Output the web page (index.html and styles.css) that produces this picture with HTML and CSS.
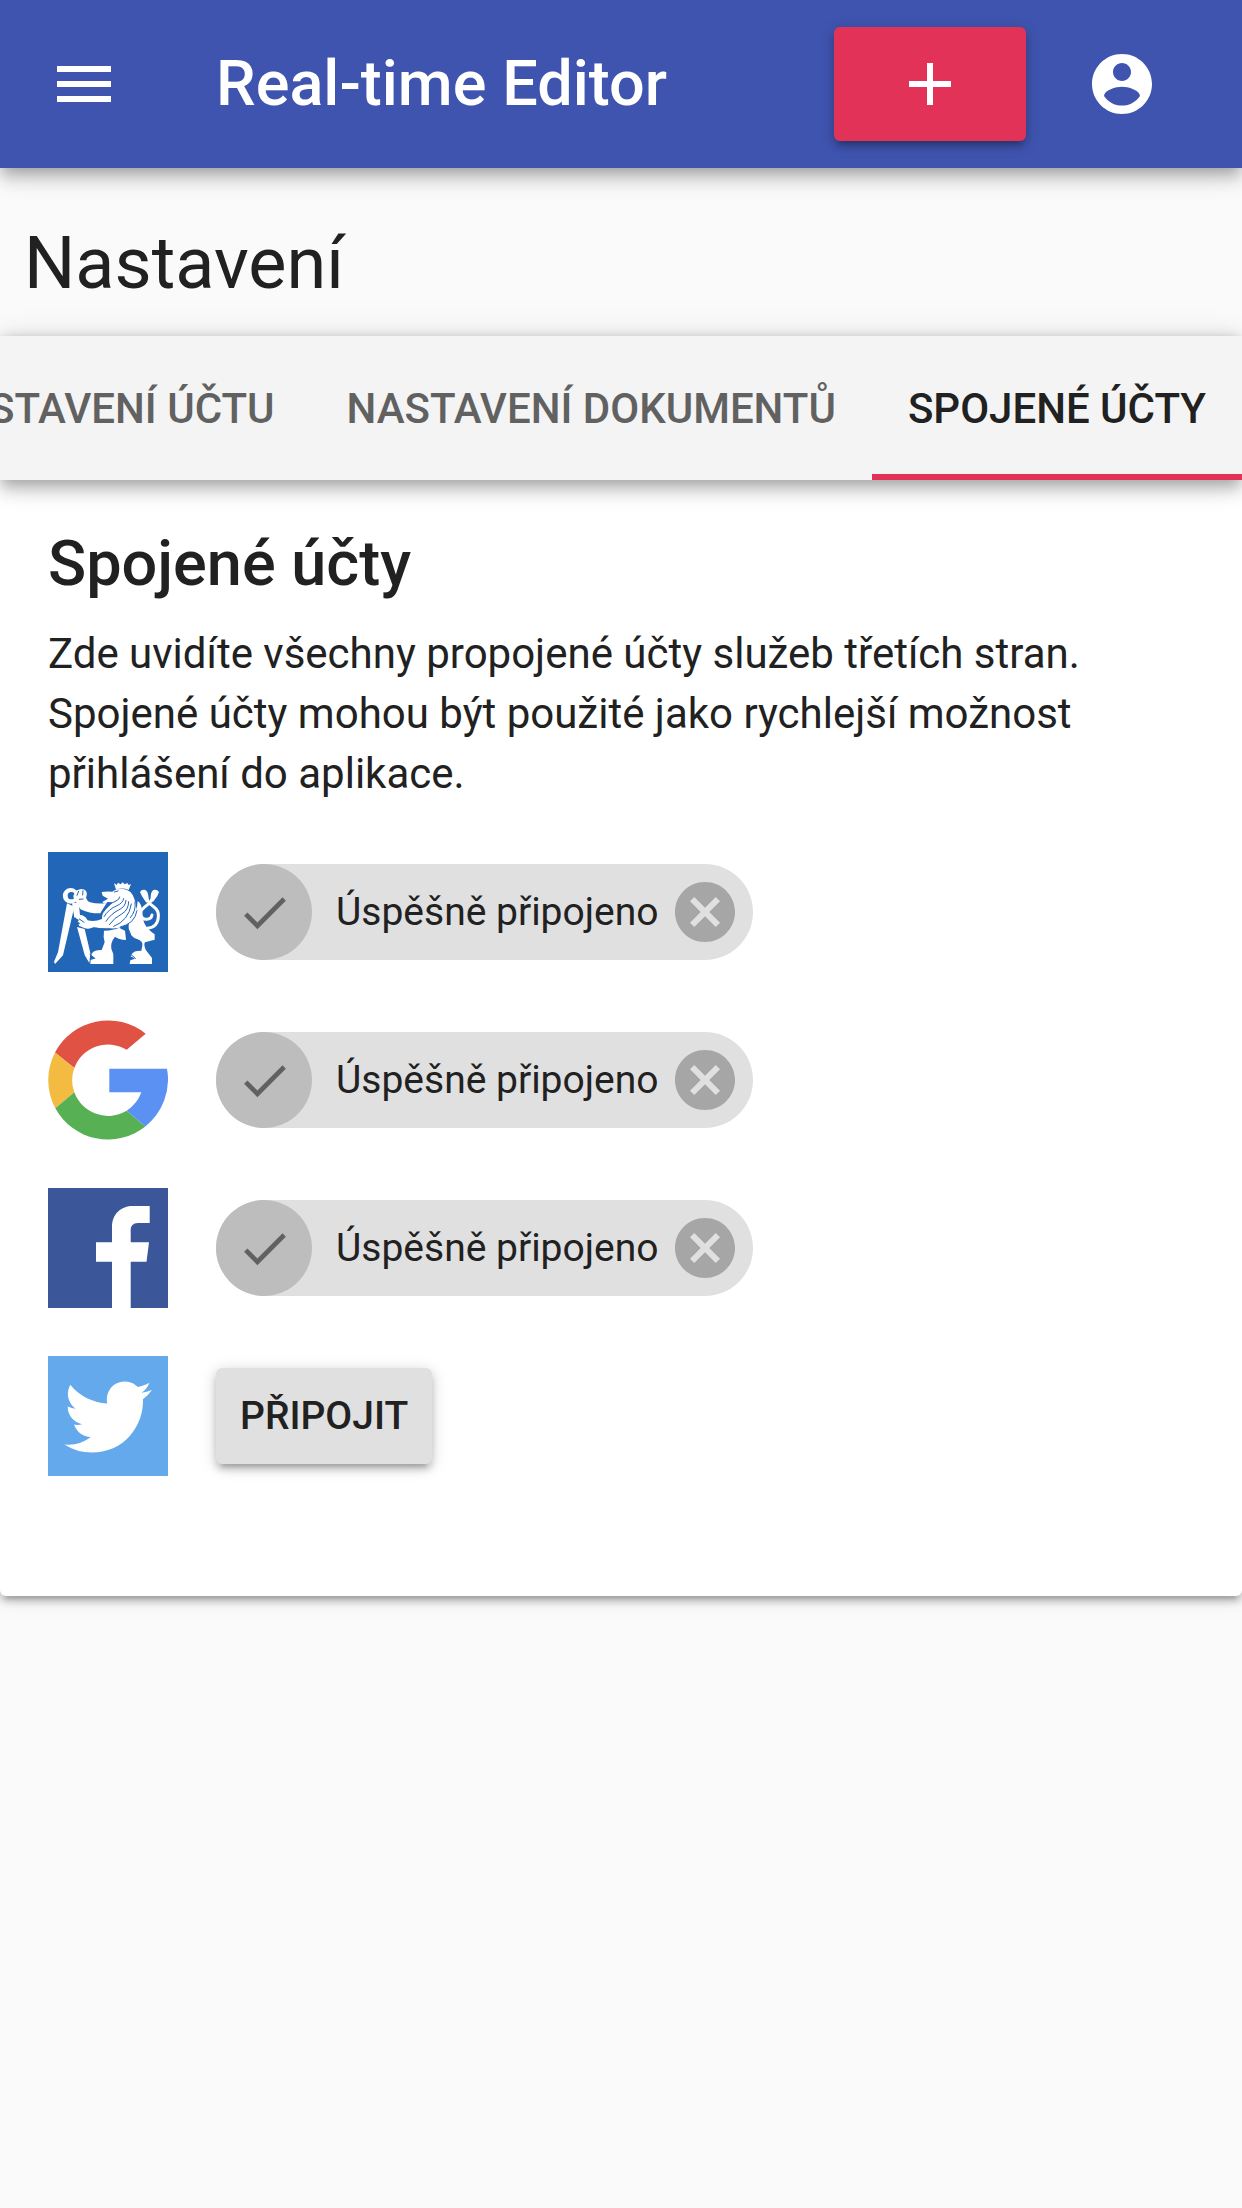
FILE: index.html
```html
<!DOCTYPE html>
<html lang="cs">
<head>
<meta charset="utf-8">
<meta name="viewport" content="width=device-width, initial-scale=1">
<title>Real-time Editor</title>
<link rel="stylesheet" href="styles.css">
</head>
<body>
<svg class="sprite" aria-hidden="true">
  <symbol id="check" viewBox="0 0 24 24"><path d="M9 16.17L4.83 12l-1.42 1.41L9 19 21 7l-1.41-1.41z"/></symbol>
  <symbol id="cancel" viewBox="0 0 24 24"><path d="M12 2C6.47 2 2 6.47 2 12s4.47 10 10 10 10-4.47 10-10S17.53 2 12 2zm5 13.59L15.59 17 12 13.41 8.41 17 7 15.59 10.59 12 7 8.41 8.41 7 12 10.59 15.59 7 17 8.41 13.41 12 17 15.59z"/></symbol>
</svg>

<header class="app-bar">
  <button class="icon-button" type="button" aria-label="Menu">
    <svg class="icon" viewBox="0 0 24 24"><path d="M3 18h18v-2H3v2zm0-5h18v-2H3v2zm0-7v2h18V6H3z"/></svg>
  </button>
  <div class="app-title">Real-time Editor</div>
  <button class="create-button" type="button" aria-label="Nový dokument">
    <svg class="icon" viewBox="0 0 24 24"><path d="M19 13h-6v6h-2v-6H5v-2h6V5h2v6h6v2z"/></svg>
  </button>
  <button class="icon-button icon-button-wide" type="button" aria-label="Účet">
    <svg class="icon" viewBox="0 0 24 24"><path d="M12 2C6.48 2 2 6.48 2 12s4.48 10 10 10 10-4.48 10-10S17.52 2 12 2zm0 3c1.66 0 3 1.34 3 3s-1.34 3-3 3-3-1.34-3-3 1.34-3 3-3zm0 14.200c-2.500 0-4.710-1.280-6-3.220.030-1.990 4-3.080 6-3.080 1.990 0 5.970 1.090 6 3.080-1.290 1.940-3.500 3.220-6 3.220z"/></svg>
  </button>
</header>

<main>
  <h1 class="page-title">Nastavení</h1>
  <section class="card">
    <nav class="tabs">
      <button class="tab" type="button">Nastavení účtu</button>
      <button class="tab" type="button">Nastavení dokumentů</button>
      <button class="tab tab-active" type="button" aria-current="page">Spojené účty</button>
    </nav>
    <div class="card-body">
      <h2 class="section-title">Spojené účty</h2>
      <p class="intro">Zde uvidíte všechny propojené účty služeb třetích stran. Spojené účty mohou být použité jako rychlejší možnost přihlášení do aplikace.</p>
      <ul class="accounts">
        <li class="account">
          <svg class="logo" viewBox="0 -72 360 360" role="img" aria-label="ČVUT">
            <path fill="#2267b7" d="M0-72h360v360H0z"/>
            <g fill="#fff">
              <path fill-rule="evenodd" d="M68 36a23 23 0 1 0 0 47 23 23 0 0 0 0-47zm2 12a11 11 0 1 1 0 22 11 11 0 0 1 0-22z"/>
              <path d="M57 82l22 10-34 146-24 26-3-7 12-28z"/>
              <path d="M72 82l20-3 4 38-17 8zM87 153l23 6 17 72-3 30-14-24z"/>
              <path d="M79 53q1-10 13-12 14-5 22 4 5 8 0 20 3 10 12 14 25 6 50 2l-11 17-8 14q-31 1-57-11-10-7-7-17l-9-5-7-13q-3-8 2-13z"/>
              <path d="M79 121q10-8 24-3 11 4 16 15 21 5 43-4l6 20q7 5 14 8l-29-1q-10-3-17-2-15 8-29 1l-13-5q-5-6 3-8l-8-5 4-5-9-5z"/>
              <path d="M198 21l8 6 4-7 8 5 6-6 6 6 8-4 4 6 7-3-7 18q-18-8-38-1z"/>
              <path d="M161 48q16-3 32-1 10-9 29-9 30 2 38 33 8 23 2 46-8 26-48 38-22 5-49-1-4-14-3-32 2-15 18-28l14-15-15-1q-9 9-16 0l17-10-16-9z"/>
              <path d="M269 75q13 9 14 34 0 29 14 46 13 13 23 20v16l-29 8q-5 7 3 24l18 23v18h-67l2-11 14-5-13-7q4-14 20-16l12-1 3-15q3-12-14-19-26-8-27-34-1-21 10-32 15-18 17-49z"/>
              <path d="M168 164q30-1 45-9l18 9q2 16 3 28-22-2-33-10-14 17-11 36l6 17v29h-69l1-12 15-5-14-8q5-15 20-16l12-1 9-23q-5-17-2-35z"/>
              <path d="M276 48q4-8 13-7 9 2 11 13l3 18-8 8q-7-10-13-19zM333 48q-5-8-14-7-8 2-10 13l-2 18 8 6q6-9 13-18z"/>
            </g>
            <g fill="none" stroke="#fff" stroke-linecap="round" stroke-width="9">
              <path d="M299 73q5 10 18 19 16 11 14 31-2 31-33 34-20 2-28-16"/>
              <path d="M311 72q-8 13-22 22-13 10-11 22 3 15 18 14 14-1 16-13"/>
            </g>
            <g fill="none" stroke="#2267b7" stroke-width="3" stroke-linecap="round">
              <path d="M199 48l11-3M166 108q12-23 38-33 10-4 11-12M168 122q14-23 39-33 18-8 20-21M174 136q15-23 38-34 21-10 22-29M184 146q15-21 37-32 21-12 21-37M197 151q45-17 53-67M261 78q4 27-14 47M217 153q43-9 50-49M233 151q15 14 16 29"/>
              <path d="M92 46l-5 12M105 44l-1 13M94 70l11-1M94 129l14 10M126 235l13 11M248 235l14 12"/>
            </g>
          </svg>
          <div class="chip">
            <span class="chip-avatar"><svg class="icon" aria-hidden="true"><use href="#check"/></svg></span>
            <span class="chip-label">Úspěšně připojeno</span>
            <button class="chip-delete" type="button" aria-label="Odpojit ČVUT"><svg class="icon"><use href="#cancel"/></svg></button>
          </div>
        </li>
        <li class="account">
          <svg class="logo" viewBox="0 0 120 120" role="img" aria-label="Google">
            <path fill="#e05243" d="M7 32.500A60 60 0 0 1 97.700 13.700L78.700 29.700A36 36 0 0 0 26.300 48z"/>
            <path fill="#f3bb42" d="M7 32.500A60 60 0 0 0 7.300 88.300L26.300 72.300A36 36 0 0 1 26.300 48z"/>
            <path fill="#57b054" d="M7.300 88.300A60 60 0 0 0 97.300 106.500L78.700 90.700A36 36 0 0 1 26.300 72.300z"/>
            <path fill="#5a91f3" d="M61.300 48.700H119A60 60 0 0 1 97.300 106.500L78.700 90.700Q89.500 83.500 93.300 72.300H61.300z"/>
          </svg>
          <div class="chip">
            <span class="chip-avatar"><svg class="icon" aria-hidden="true"><use href="#check"/></svg></span>
            <span class="chip-label">Úspěšně připojeno</span>
            <button class="chip-delete" type="button" aria-label="Odpojit Google"><svg class="icon"><use href="#cancel"/></svg></button>
          </div>
        </li>
        <li class="account">
          <svg class="logo" viewBox="0 0 120 120" role="img" aria-label="Facebook">
            <path fill="#3c5799" d="M0 0h120v120H0z"/>
            <path fill="#fff" d="M64 120V73.700H48V54.300H64V39C64 26 73 18 85 18h16.700v17H90c-5 0-7.300 3-7.300 7v12.300h18.300l-2.500 19.400H82.700V120z"/>
          </svg>
          <div class="chip">
            <span class="chip-avatar"><svg class="icon" aria-hidden="true"><use href="#check"/></svg></span>
            <span class="chip-label">Úspěšně připojeno</span>
            <button class="chip-delete" type="button" aria-label="Odpojit Facebook"><svg class="icon"><use href="#cancel"/></svg></button>
          </div>
        </li>
        <li class="account">
          <svg class="logo" viewBox="0 0 120 120" role="img" aria-label="Twitter">
            <path fill="#64a9eb" d="M0 0h120v120H0z"/>
            <path fill="#fff" transform="translate(16.3 17.2) scale(3.65)" d="M23.953 4.570a10 10 0 0 1-2.825.775 4.958 4.958 0 0 0 2.163-2.723c-.951.555-2.005.959-3.127 1.184a4.920 4.920 0 0 0-8.384 4.482C7.690 8.095 4.067 6.130 1.640 3.162a4.822 4.822 0 0 0-.666 2.475c0 1.710.870 3.213 2.188 4.096a4.904 4.904 0 0 1-2.228-.616v.060a4.923 4.923 0 0 0 3.946 4.827 4.996 4.996 0 0 1-2.212.085 4.936 4.936 0 0 0 4.604 3.417 9.867 9.867 0 0 1-6.102 2.105c-.390 0-.779-.023-1.170-.067a13.995 13.995 0 0 0 7.557 2.209c9.053 0 13.998-7.496 13.998-13.985 0-.210 0-.420-.015-.630A9.935 9.935 0 0 0 24 4.590z"/>
          </svg>
          <button class="connect-button" type="button">Připojit</button>
        </li>
      </ul>
    </div>
  </section>
</main>
</body>
</html>
```

FILE: styles.css
```css
* {
  box-sizing: border-box;
}

body {
  margin: 0;
  min-height: 100vh;
  background: #fafafa;
  color: #212121;
  font-family: Roboto, "Liberation Sans", sans-serif;
  font-size: 42px;
  line-height: 60px;
}

button {
  margin: 0;
  padding: 0;
  border: 0;
  background: none;
  color: inherit;
  font: inherit;
  cursor: pointer;
}

.sprite {
  display: none;
}

.icon {
  display: block;
  width: 72px;
  height: 72px;
  fill: currentColor;
}

/* Top bar */
.app-bar {
  display: flex;
  align-items: center;
  height: 168px;
  padding: 0 48px;
  background: #3f54af;
  color: #fff;
  box-shadow: 0 6px 12px -3px rgba(0, 0, 0, .2), 0 12px 15px rgba(0, 0, 0, .14), 0 3px 30px rgba(0, 0, 0, .12);
}

.app-title {
  flex: 1;
  margin-left: 96px;
  font-size: 63px;
  font-weight: 500;
  line-height: 72px;
  white-space: nowrap;
}

.icon-button-wide {
  display: flex;
  justify-content: center;
  width: 144px;
  margin-left: 24px;
}

.create-button {
  display: flex;
  align-items: center;
  justify-content: center;
  width: 192px;
  height: 114px;
  border-radius: 6px;
  background: #e33258;
  box-shadow: 0 3px 15px rgba(0, 0, 0, .2), 0 6px 6px rgba(0, 0, 0, .14), 0 9px 3px -6px rgba(0, 0, 0, .12);
}

.page-title {
  margin: 0;
  padding: 48px 24px 24px;
  font-size: 72px;
  font-weight: 400;
  line-height: 96px;
}

/* Settings card */
.card {
  border-radius: 6px;
  background: #fff;
  box-shadow: 0 3px 15px rgba(0, 0, 0, .2), 0 6px 6px rgba(0, 0, 0, .14), 0 9px 3px -6px rgba(0, 0, 0, .12);
}

.tabs {
  display: flex;
  justify-content: flex-end;
  height: 144px;
  background: #f4f4f4;
  box-shadow: 0 6px 12px -3px rgba(0, 0, 0, .2), 0 12px 15px rgba(0, 0, 0, .14), 0 3px 30px rgba(0, 0, 0, .12);
}

.tab {
  flex: none;
  padding: 8px 36px 0;
  border-bottom: 6px solid transparent;
  color: #616161;
  font-weight: 500;
  text-transform: uppercase;
  white-space: nowrap;
}

.tab-active {
  border-bottom-color: #e33258;
  color: #212121;
}

.card-body {
  padding: 48px 48px 120px;
}

.section-title {
  margin: 0 0 24px;
  font-size: 63px;
  font-weight: 500;
  line-height: 72px;
}

.intro {
  margin: 0 0 48px;
}

.accounts {
  display: flex;
  flex-direction: column;
  gap: 48px;
  margin: 0;
  padding: 0;
  list-style: none;
}

.account {
  display: flex;
  align-items: center;
  gap: 48px;
}

.logo {
  flex: none;
  width: 120px;
  height: 120px;
}

.chip {
  display: flex;
  align-items: center;
  height: 96px;
  padding-right: 12px;
  border-radius: 48px;
  background: #e0e0e0;
  font-size: 39px;
}

.chip-avatar {
  display: flex;
  align-items: center;
  justify-content: center;
  width: 96px;
  height: 96px;
  border-radius: 50%;
  background: #bdbdbd;
  color: #616161;
}

.chip-avatar .icon {
  width: 57px;
  height: 57px;
}

.chip-label {
  padding: 0 10px 0 24px;
  white-space: nowrap;
}

.chip-delete {
  color: #a6a6a6;
}

.connect-button {
  height: 96px;
  padding: 0 24px;
  border-radius: 6px;
  background: #e0e0e0;
  font-size: 39px;
  font-weight: 500;
  text-transform: uppercase;
  box-shadow: 0 3px 15px rgba(0, 0, 0, .2), 0 6px 6px rgba(0, 0, 0, .14), 0 9px 3px -6px rgba(0, 0, 0, .12);
}
```
